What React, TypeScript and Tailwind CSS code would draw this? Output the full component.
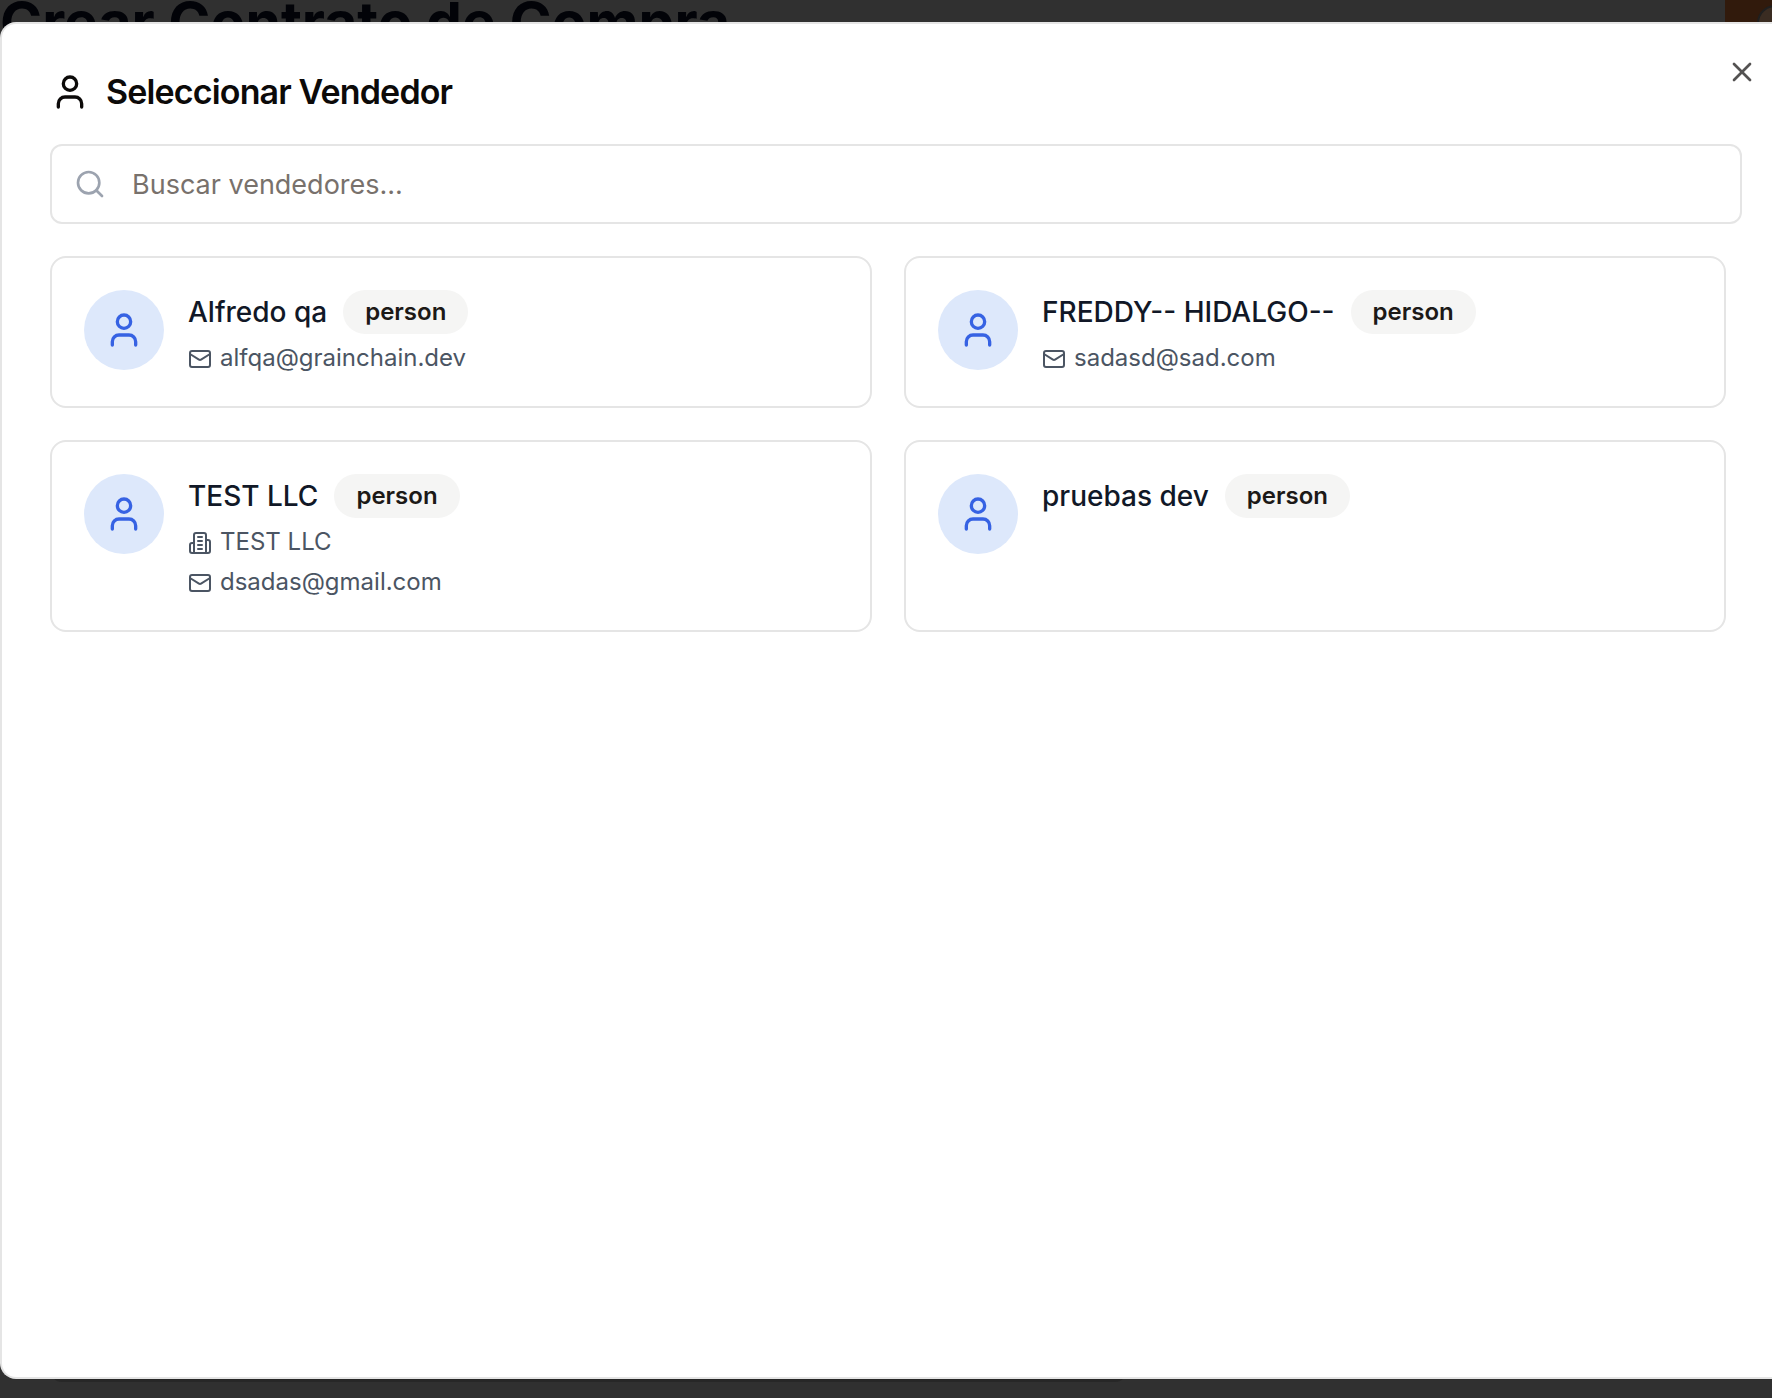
import type { ReactNode } from 'react';
import { User, Search, X } from 'lucide-react';

type Seller = { name: string; kind: string; company?: string; email?: string };

const sellers: Seller[] = [
  { name: 'Alfredo qa', kind: 'person', email: 'alfqa@grainchain.dev' },
  { name: 'FREDDY-- HIDALGO--', kind: 'person', email: 'sadasd@sad.com' },
  { name: 'TEST LLC', kind: 'person', company: 'TEST LLC', email: 'dsadas@gmail.com' },
  { name: 'pruebas dev', kind: 'person' },
];

function LineIcon({ children }: { children: ReactNode }) {
  return (
    <svg
      viewBox="0 0 24 24"
      fill="none"
      stroke="currentColor"
      strokeWidth={2}
      strokeLinecap="round"
      strokeLinejoin="round"
      aria-hidden="true"
      className="mr-2 inline size-6 align-middle"
    >
      {children}
    </svg>
  );
}

function MailIcon() {
  return (
    <LineIcon>
      <rect width="20" height="16" x="2" y="4" rx="2" />
      <path d="m22 7-8.97 5.7a1.94 1.94 0 0 1-2.06 0L2 7" />
    </LineIcon>
  );
}

function BuildingIcon() {
  return (
    <LineIcon>
      <path d="M6 22V4a2 2 0 0 1 2-2h8a2 2 0 0 1 2 2v18Z" />
      <path d="M6 12H4a2 2 0 0 0-2 2v6a2 2 0 0 0 2 2h2" />
      <path d="M18 9h2a2 2 0 0 1 2 2v9a2 2 0 0 1-2 2h-2" />
      <path d="M10 6h4M10 10h4M10 14h4M10 18h4" />
    </LineIcon>
  );
}

function SellerCard({ seller }: { seller: Seller }) {
  return (
    <button type="button" className="flex items-start gap-6 rounded-2xl border-2 border-[#e5e5e5] bg-white p-8 text-left">
      <span className="flex size-20 shrink-0 items-center justify-center rounded-full bg-[#dde8fb]">
        <User className="size-10 text-[#3662e3]" aria-hidden="true" />
      </span>
      <span className="min-w-0 flex-1">
        <span className="flex items-center gap-4">
          <span className="text-[28px] leading-10 font-medium text-[#111827]">{seller.name}</span>
          <span className="rounded-full bg-[#f5f5f4] px-[22px] py-1.5 text-2xl leading-8 font-semibold text-[#1c1917]">
            {seller.kind}
          </span>
        </span>
        {seller.company && (
          <span className="mt-2 block text-2xl leading-8 text-[#4b5563]">
            <BuildingIcon />
            {seller.company}
          </span>
        )}
        {seller.email && (
          <span className="mt-2 block text-2xl leading-8 text-[#4b5563]">
            <MailIcon />
            {seller.email}
          </span>
        )}
      </span>
    </button>
  );
}

export default function App() {
  return (
    <div className="relative flex h-screen flex-col overflow-hidden bg-[#303030] font-['Inter',sans-serif]">
      <header className="-mt-4 flex items-center justify-between">
        <h1 className="text-[57px] leading-[78px] font-bold text-[#020308]">Crear Contrato de Compra</h1>
        <div className="flex h-[78px] w-[47px] items-center bg-[#311a0c] pl-8">
          <span className="size-9 shrink-0 rounded-full border-2 border-[#1f1f1f] bg-[#3a2c22]" />
        </div>
      </header>
      <div className="mt-8 mr-[645px] mb-4 ml-[50px] flex-1 rounded-xl bg-[#272727]" />

      <div className="fixed inset-0 flex pt-[22px] pb-[19px]">
        <section
          role="dialog"
          aria-labelledby="dialog-title"
          className="relative flex flex-1 flex-col gap-8 rounded-l-2xl border-2 border-r-0 border-[#e5e5e5] bg-white py-12 pr-[30px] pl-12"
        >
          <div className="flex h-10 items-center gap-4">
            <User className="size-10 text-[#0c0a09]" aria-hidden="true" />
            <h2 id="dialog-title" className="text-[34px] leading-10 font-semibold tracking-tight text-[#0c0a09]">
              Seleccionar Vendedor
            </h2>
          </div>

          <div className="relative">
            <Search className="absolute top-6 left-6 size-8 text-[#9ca3af]" aria-hidden="true" />
            <input
              type="text"
              aria-label="Buscar vendedores"
              placeholder="Buscar vendedores..."
              className="block h-20 w-full rounded-xl border-2 border-[#e5e5e5] bg-white pr-6 pl-20 text-[27px] leading-10 placeholder:text-[#78716c]"
            />
          </div>

          <div className="grid grid-cols-2 gap-8 pr-4">
            {sellers.map((seller) => (
              <SellerCard key={seller.name} seller={seller} />
            ))}
          </div>

          <button
            type="button"
            aria-label="Cerrar"
            className="absolute top-8 right-3.5 size-8 text-[#0c0a09] opacity-70"
          >
            <X className="size-8" aria-hidden="true" />
          </button>
        </section>
      </div>
    </div>
  );
}
